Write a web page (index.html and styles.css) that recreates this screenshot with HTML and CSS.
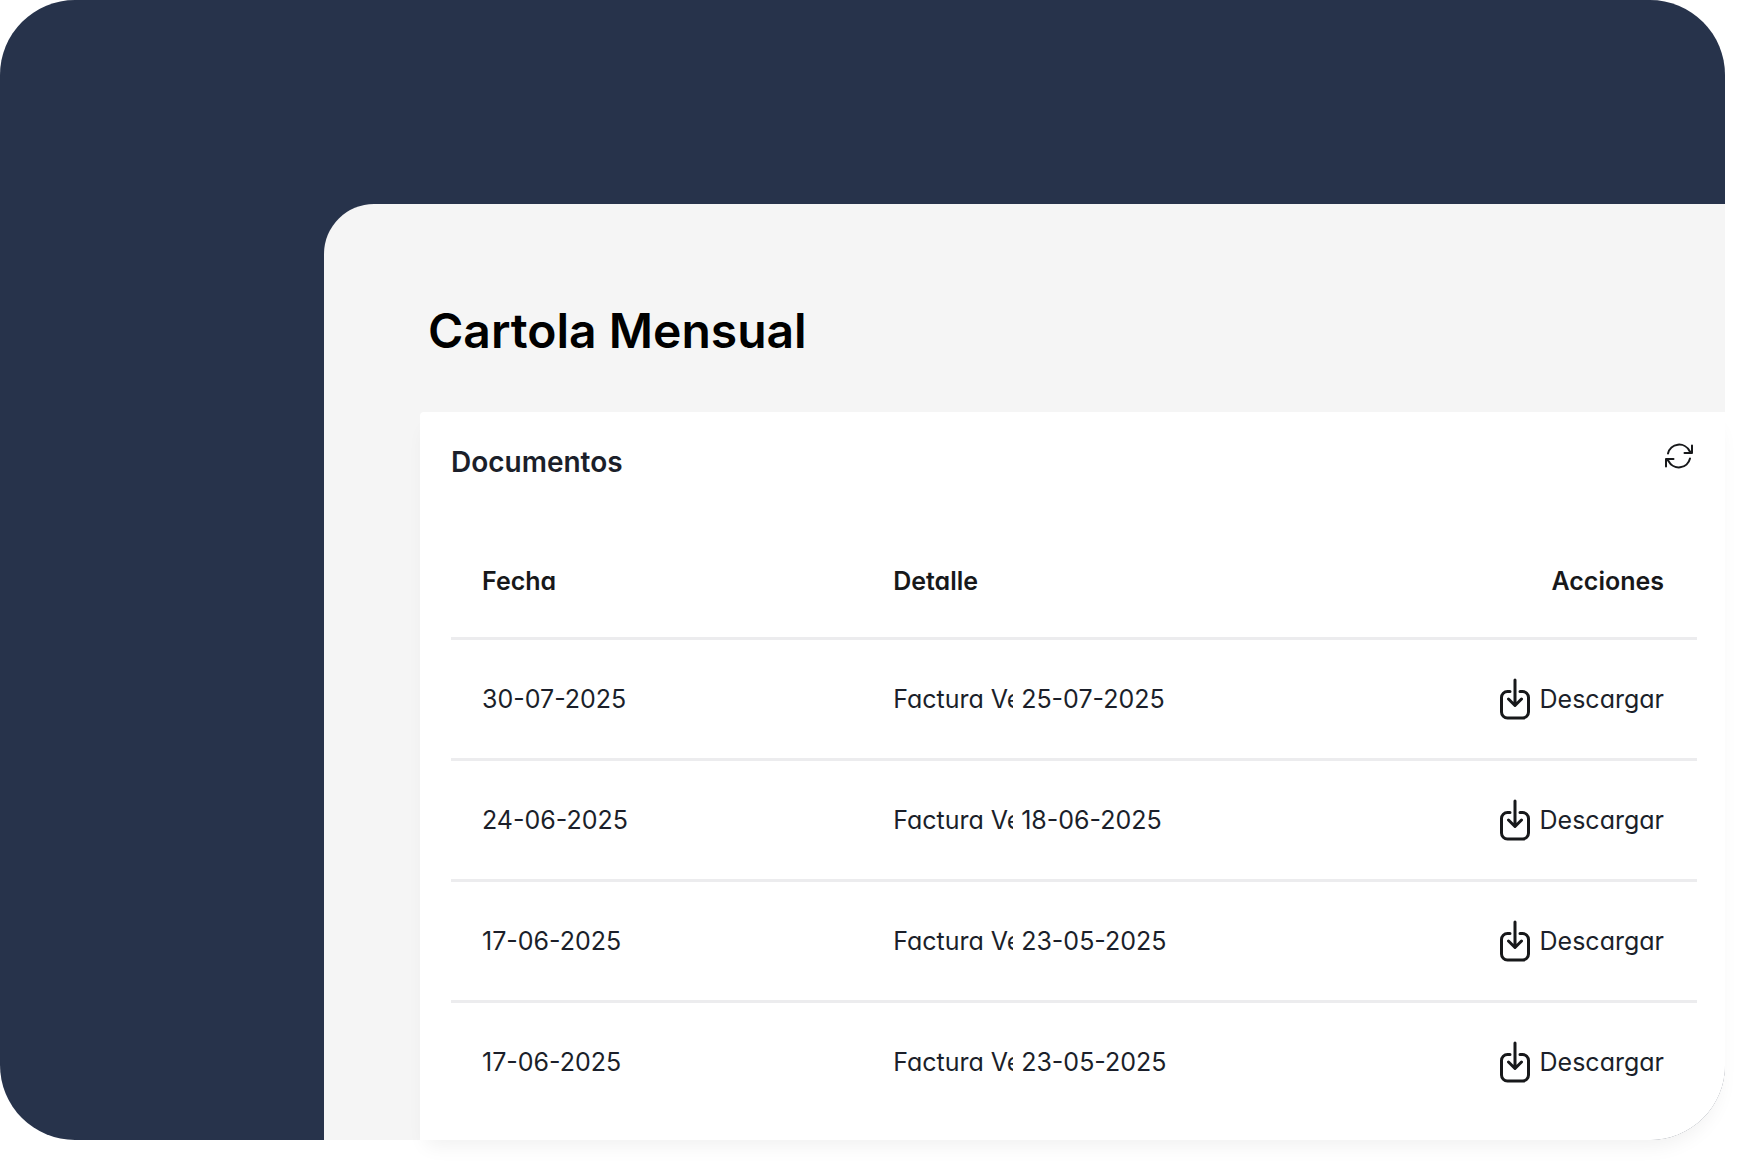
FILE: index.html
```
<!DOCTYPE html>
<html lang="es">
<head>
  <meta charset="UTF-8">
  <meta name="viewport" content="width=device-width, initial-scale=1">
  <title>Cartola Mensual</title>
  <link rel="stylesheet" href="styles.css">
</head>
<body>

<!-- Shared icon -->
<svg class="sprite" aria-hidden="true">
  <symbol id="icon-download" viewBox="0 0 32 42">
    <path d="M11 13.500H8.500a6 6 0 0 0-6 6v14.500a6 6 0 0 0 6 6h15a6 6 0 0 0 6-6v-14.500a6 6 0 0 0-6-6H21M16 2v25M9.500 21l6.500 6.500 6.500-6.500"/>
  </symbol>
</svg>

<main class="frame">
  <div class="panel">
    <h1>Cartola Mensual</h1>

    <section class="card">
      <div class="card-header">
        <h2>Documentos</h2>
        <button class="refresh" type="button" aria-label="Actualizar">
          <svg viewBox="0 0 30 28">
            <path d="M4 11.500a11.500 11.500 0 0 1 21.500-2.500l2 2M28 3.500V11h-7.500M26 16.500a11.500 11.500 0 0 1-21.500 2.500l-2-2M2 24.500V17h7.500"/>
          </svg>
        </button>
      </div>

      <table>
        <thead>
          <tr>
            <th>Fecha</th>
            <th>Detalle</th>
            <th class="actions">Acciones</th>
          </tr>
        </thead>
        <tbody>
          <tr>
            <td>30-07-2025</td>
            <td><div class="detail"><span class="kind">Factura Ve</span><span>25-07-2025</span></div></td>
            <td><a href="#" class="download"><svg><use href="#icon-download"/></svg>Descargar</a></td>
          </tr>
          <tr>
            <td>24-06-2025</td>
            <td><div class="detail"><span class="kind">Factura Ve</span><span>18-06-2025</span></div></td>
            <td><a href="#" class="download"><svg><use href="#icon-download"/></svg>Descargar</a></td>
          </tr>
          <tr>
            <td>17-06-2025</td>
            <td><div class="detail"><span class="kind">Factura Ve</span><span>23-05-2025</span></div></td>
            <td><a href="#" class="download"><svg><use href="#icon-download"/></svg>Descargar</a></td>
          </tr>
          <tr>
            <td>17-06-2025</td>
            <td><div class="detail"><span class="kind">Factura Ve</span><span>23-05-2025</span></div></td>
            <td><a href="#" class="download"><svg><use href="#icon-download"/></svg>Descargar</a></td>
          </tr>
        </tbody>
      </table>
    </section>
  </div>
</main>

</body>
</html>
```

FILE: styles.css
```
* {
  box-sizing: border-box;
}

body {
  margin: 0;
  padding: 0 21px 31px 0;
  background-color: #fff;
  color: #1b1f2a;
  font-family: Inter, "Liberation Sans", sans-serif;
}

h1,
h2 {
  margin: 0;
  font-weight: 600;
}

svg {
  fill: none;
  stroke: #17181a;
  stroke-width: 2;
  stroke-linecap: round;
  stroke-linejoin: round;
}

.sprite {
  position: absolute;
  width: 0;
  height: 0;
}

.frame {
  padding: 204px 0 0 324px;
  background-color: #27334b;
  border-radius: 75px;
}

.panel {
  padding: 97px 0 0 96px;
  background-color: #f5f5f5;
  border-radius: 50px 0 75px 0;
}

h1 {
  margin-left: 8px;
  color: #000;
  font-size: 48px;
  line-height: 60px;
}

.card {
  margin-top: 51px;
  padding: 28px 28px 18px 31px;
  background-color: #fff;
  border-radius: 4px 0 75px 0;
  box-shadow: 0 12px 20px -6px rgba(0, 0, 0, 0.06);
}

.card-header {
  display: flex;
  justify-content: space-between;
  align-items: flex-start;
}

h2 {
  font-size: 28px;
  line-height: 45px;
}

.refresh {
  padding: 2px 3px;
  border: none;
  background: none;
  cursor: pointer;
}

.refresh svg {
  display: block;
  width: 30px;
  height: 28px;
}

table {
  width: 100%;
  margin-top: 41px;
  table-layout: fixed;
  border-collapse: collapse;
  font-size: 25px;
  line-height: 32px;
  font-feature-settings: "cv11";
}

th,
td {
  height: 121px;
  padding: 0 33px 0 31px;
  text-align: left;
}

th {
  height: 112px;
  color: #17181a;
  font-weight: 600;
}

th:first-child {
  width: 33%;
}

tbody tr {
  border-top: 3px solid #ececee;
}

th.actions {
  text-align: right;
}

.detail {
  display: flex;
  gap: 8px;
}

.kind {
  width: 120px;
  overflow: hidden;
  white-space: nowrap;
}

.download {
  display: flex;
  justify-content: flex-end;
  align-items: center;
  gap: 9px;
  color: inherit;
  text-decoration: none;
}

.download svg {
  width: 32px;
  height: 42px;
  stroke-width: 3;
}
```
